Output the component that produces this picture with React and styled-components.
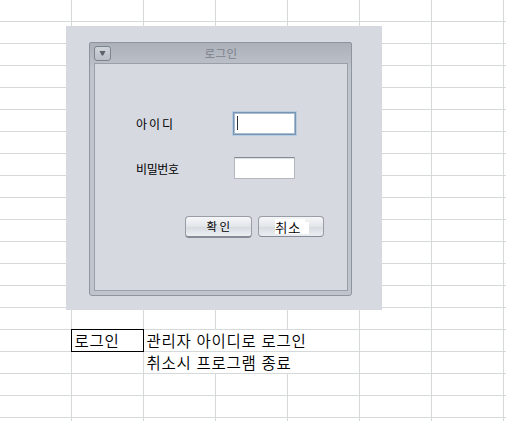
import React from "react";
import styled, { createGlobalStyle } from "styled-components";

const GlobalStyle = createGlobalStyle`
  html, body { margin: 0; overflow: hidden; background: #fff; }
  * { box-sizing: border-box; }
`;

const font = `"Noto Sans CJK KR", "Liberation Sans", sans-serif`;

const Sheet = styled.main`
  position: relative;
  width: 506px;
  height: 421px;
  overflow: hidden;
  background: #fff;
  font-family: ${font};
`;

const Row = styled.div`
  display: grid;
  grid-template-columns: repeat(7, 72px) 2px;
  height: 22px;
`;

const Cell = styled.div`
  position: relative;
  grid-column: span ${(p) => p.$span || 1};
  border-right: 1px solid #d5d9da;
  border-bottom: 1px solid #d5d9da;
  padding-left: 2.5px;
  font-size: 15.5px;
  font-weight: 350;
  line-height: 21px;
  letter-spacing: 0.7px;
  word-spacing: 1px;
  white-space: nowrap;
  color: #000;
`;

const SelectedCell = styled(Cell)`
  &::after {
    content: "";
    position: absolute;
    inset: -1px -1px -1px -1px;
    border: 1px solid #000;
  }
`;

/* Floating picture placed over the cells */
const Picture = styled.section`
  position: absolute;
  left: 66px;
  top: 26px;
  width: 316px;
  height: 284px;
  padding: 16px 30px 14px 23px;
  background: #d6d9e0;
`;

const Frame = styled.div`
  display: flex;
  flex-direction: column;
  width: 263px;
  height: 254px;
  padding: 0 3px 4px 4px;
  border: 1px solid #8f949d;
  border-radius: 2px 2px 3px 3px;
  background: linear-gradient(#acb0b9, #babec7 20px, #c0c4cc 24px);
`;

const TitleBar = styled.header`
  display: grid;
  grid-template-columns: 18px 1fr 18px;
  align-items: center;
  height: 20px;
`;

const MenuButton = styled.button`
  display: flex;
  align-items: center;
  justify-content: center;
  width: 17px;
  height: 15px;
  padding: 0;
  border: 1px solid #7e848e;
  border-radius: 3px;
  background: linear-gradient(#d0d4db, #b9bec7);
`;

const Title = styled.h1`
  margin: 0;
  text-align: center;
  font-size: 11.5px;
  font-weight: 400;
  line-height: 20px;
  letter-spacing: 0.4px;
  color: #7c828c;
`;

const Body = styled.form`
  flex: 1;
  padding: 47px 23px 0 41px;
  border: 1px solid #9a9fa8;
  background: #d6d9e0;
`;

const Field = styled.label`
  display: grid;
  grid-template-columns: 97px 64px;
  align-items: center;
  height: 24px;
  margin-bottom: ${(p) => p.$gap}px;
`;

const Label = styled.span`
  padding-top: 1px;
  font-size: 12px;
  font-weight: 400;
  line-height: 23px;
  letter-spacing: ${(p) => p.$spacing}px;
  color: #000;
`;

const Input = styled.span`
  display: flex;
  align-items: center;
  width: 61px;
  height: 22px;
  margin-left: 1px;
  border: 1px solid #b4b8bf;
  border-top-color: #858a93;
  background: #fff;
  box-shadow: inset 0 1px 1px #dcdfe3;
`;

const FocusedInput = styled(Input)`
  width: 63px;
  height: 23px;
  padding-left: 3px;
  margin-left: 0;
  border: 1px solid #7795b4;
  box-shadow: 0 0 0 1px #b7cce0, inset 0 0 0 1px #a9bccf;
`;

const Caret = styled.i`
  width: 1px;
  height: 14px;
  background: #30343a;
`;

const Actions = styled.div`
  display: flex;
  justify-content: flex-end;
  gap: 6px;
`;

const Button = styled.button`
  display: flex;
  align-items: center;
  justify-content: center;
  width: ${(p) => p.$width}px;
  height: 22px;
  padding: 0 0 1px 2px;
  border: 1px solid #989da6;
  border-bottom: 2px solid #858b96;
  border-radius: 4px;
  background: linear-gradient(#f5f6f8, #e3e6e9 50%, #d8dce1 55%, #eceff2);
  font-family: ${font};
  font-size: 11.5px;
  font-weight: 400;
  letter-spacing: 2.3px;
  color: #000;
`;

const CancelButton = styled(Button)`
  padding: 0 0 0 16px;
  border-bottom-width: 1px;
  height: 21px;
  justify-content: flex-start;
`;

const CancelText = styled.span`
  width: 34px;
  height: 15px;
  line-height: 17px;
  font-size: 13.5px;
  font-weight: 350;
  letter-spacing: 0.5px;
  text-align: left;
  color: #000;
  background: #fff;
  clip-path: polygon(0 0, 30px 0, 30px 3px, 34px 3px, 34px 100%, 0 100%);
`;

const notes = {
  15: { tag: "로그인", text: "관리자 아이디로 로그인" },
  16: { tag: "", text: "취소시 프로그램 종료" },
};

function SheetRow({ note }) {
  if (!note) {
    return (
      <Row>
        {Array.from({ length: 8 }, (_, i) => (
          <Cell key={i} />
        ))}
      </Row>
    );
  }
  return (
    <Row>
      <Cell />
      {note.tag ? <SelectedCell>{note.tag}</SelectedCell> : <Cell />}
      <Cell $span={3}>{note.text}</Cell>
      <Cell />
      <Cell />
      <Cell />
    </Row>
  );
}

export default function App() {
  return (
    <Sheet>
      <GlobalStyle />
      {Array.from({ length: 20 }, (_, i) => (
        <SheetRow key={i} note={notes[i]} />
      ))}
      <Picture>
        <Frame>
          <TitleBar>
            <MenuButton type="button" aria-label="menu">
              <svg width="7" height="6" viewBox="0 0 7 6">
                <path d="M0.5 1h6L4.2 5.5H2.8z" fill="#5c626b" />
              </svg>
            </MenuButton>
            <Title>로그인</Title>
          </TitleBar>
          <Body>
            <Field $gap={21}>
              <Label $spacing={2}>아이디</Label>
              <FocusedInput>
                <Caret />
              </FocusedInput>
            </Field>
            <Field $gap={36}>
              <Label $spacing={-0.4}>비밀번호</Label>
              <Input />
            </Field>
            <Actions>
              <Button type="button" $width={67}>확인</Button>
              <CancelButton type="button" $width={66}>
                <CancelText>취소</CancelText>
              </CancelButton>
            </Actions>
          </Body>
        </Frame>
      </Picture>
    </Sheet>
  );
}
